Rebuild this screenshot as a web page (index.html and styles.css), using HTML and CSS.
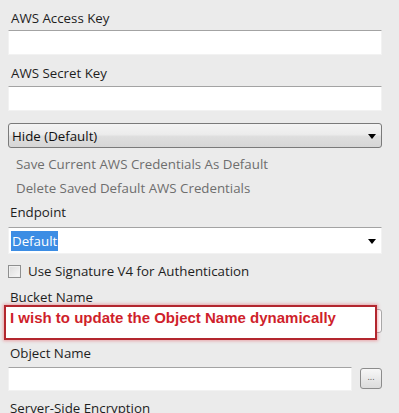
FILE: index.html
```html
<!DOCTYPE html>
<html>
<head>
<meta charset="utf-8">
<link rel="stylesheet" href="styles.css">
</head>
<body>
<div class="panel">
  <div class="label first">AWS Access Key</div>
  <div class="field"></div>
  <div class="label">AWS Secret Key</div>
  <div class="field"></div>
  <div class="select">
    <span>Hide (Default)</span>
    <span class="arrow"></span>
  </div>
  <div class="link save">Save Current AWS Credentials As Default</div>
  <div class="link">Delete Saved Default AWS Credentials</div>
  <div class="label tight">Endpoint</div>
  <div class="combo">
    <span class="sel">Default</span>
    <span class="arrow"></span>
  </div>
  <div class="check-row">
    <span class="checkbox"></span>
    <span>Use Signature V4 for Authentication</span>
  </div>
  <div class="bucket">
    <div class="label tight">Bucket Name</div>
    <div class="field boxed"></div>
    <div class="note">I wish to update the Object Name dynamically</div>
  </div>
  <div class="label obj">Object Name</div>
  <div class="obj-row">
    <div class="field grow"></div>
    <div class="dots">...</div>
  </div>
  <div class="label sse">Server-Side Encryption</div>
</div>
</body>
</html>
```
FILE: styles.css
```css
html, body {
  margin: 0;
  padding: 0;
  background: #ebebeb;
  overflow: hidden;
}
.panel {
  width: 399px;
  height: 413px;
  overflow: hidden;
  padding: 0 17px 0 8px;
  box-sizing: border-box;
  font-family: "Open Sans", "Noto Sans", sans-serif;
  font-size: 13.3px;
  color: #1e1e1e;
  display: flex;
  flex-direction: column;
}
.label {
  line-height: 24px;
  padding: 6px 0 0 3px;
  height: 25px;
  flex: none;
}
.label.first { height: 24px; }
.label.tight { padding-top: 0; height: 24px; padding-left: 2px; }
.field {
  height: 25px;
  box-sizing: border-box;
  background: #fff;
  border: 1px solid #f2f2f2;
  border-top-color: #a3a3a3;
  flex: none;
}
.select {
  margin-top: 12px;
  height: 25px;
  box-sizing: border-box;
  border: 1px solid #7a7a7a;
  border-radius: 3px;
  background: linear-gradient(#f4f4f4 0%, #ececec 45%, #dedede 55%, #d6d6d6 100%);
  display: flex;
  align-items: center;
  justify-content: space-between;
  padding: 0 5px 0 3px;
  color: #111;
  flex: none;
}
.arrow {
  width: 0;
  height: 0;
  border-left: 4.5px solid transparent;
  border-right: 4.5px solid transparent;
  border-top: 5px solid #000;
  margin-top: 1px;
}
.link {
  line-height: 24px;
  padding-left: 8px;
  color: #6e6e6e;
  flex: none;
}
.link.save { margin-top: 4px; }
.combo {
  margin-top: 3px;
  height: 27px;
  box-sizing: border-box;
  background: #fff;
  border: 1px solid #f2f2f2;
  border-top-color: #a3a3a3;
  display: flex;
  align-items: center;
  justify-content: space-between;
  padding: 0 5px 0 2px;
  flex: none;
}
.sel {
  background: #3c8de4;
  color: #fff;
  padding: 0 1px;
  line-height: 20px;
}
.check-row {
  margin-top: 5px;
  height: 24px;
  display: flex;
  align-items: center;
  gap: 7px;
  flex: none;
}
.checkbox {
  width: 13px;
  height: 13px;
  box-sizing: border-box;
  border: 1px solid #8e8f8f;
  background: linear-gradient(135deg, #dcdcdc, #f8f8f8);
  box-shadow: inset 0 0 0 1px #f0f0f0;
}
.bucket {
  position: relative;
  margin-top: 2px;
  flex: none;
}
.boxed {
  border: 1px solid #a9a9a9;
  border-radius: 3px;
  height: 24px;
}
.note {
  position: absolute;
  left: -4px;
  top: 20px;
  width: 373px;
  height: 35px;
  box-sizing: border-box;
  border: 2px solid #b3262e;
  background: #fff;
  box-shadow: 0 0 3px 1px rgba(230, 80, 90, 0.45);
  font-family: "Liberation Sans", Arial, sans-serif;
  font-weight: bold;
  font-size: 15px;
  color: #cf1f2b;
  padding: 2px 0 0 4px;
  line-height: 18px;
}
.label.obj { padding-top: 8px; height: 26px; padding-left: 2px; }
.obj-row {
  display: flex;
  align-items: flex-start;
  gap: 8px;
  flex: none;
}
.grow { flex: 1; height: 24px; }
.dots {
  width: 22px;
  height: 21px;
  box-sizing: border-box;
  border: 1px solid #8c8c8c;
  border-radius: 3px;
  background: linear-gradient(#f7f7f7, #dcdcdc);
  font-size: 9px;
  line-height: 16px;
  text-align: center;
  color: #555;
  margin-top: 1px;
}
.label.sse { padding-top: 5px; padding-left: 2px; }
```
